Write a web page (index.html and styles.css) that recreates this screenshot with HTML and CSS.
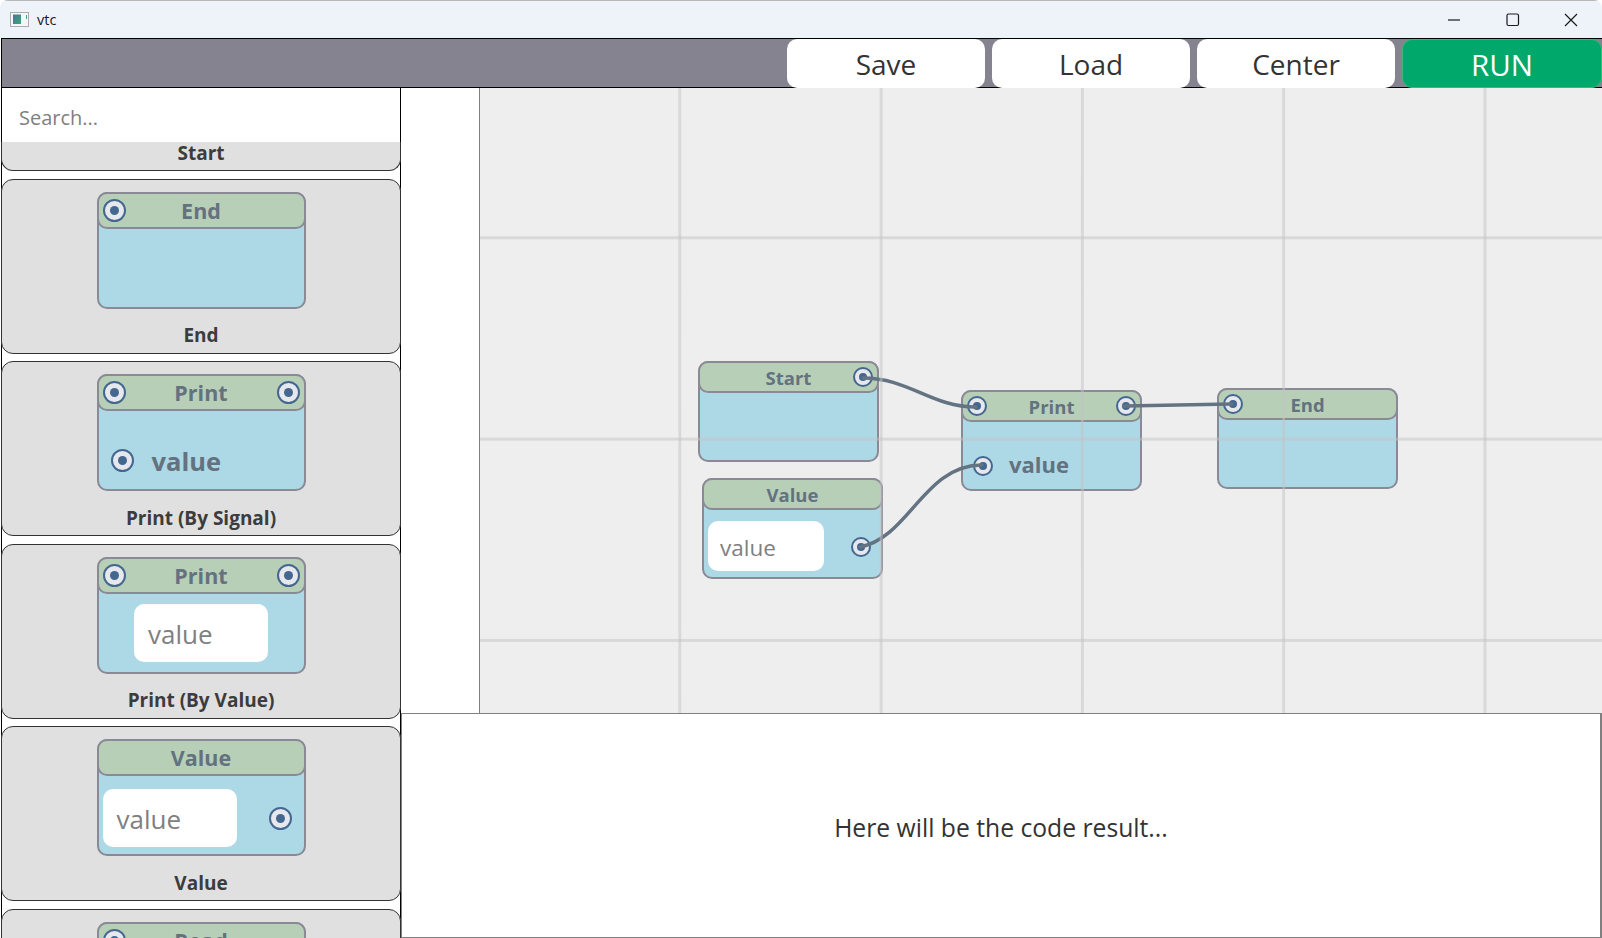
FILE: index.html
```html
<!DOCTYPE html>
<html>
  <head>
    <title>vtc</title>
    <link rel="stylesheet" href="styles.css">
  </head>
  <body>
    <div class="window">
      <div class="titlebar">
        <svg class="app-icon" width="20" height="16" viewBox="0 0 20 16">
          <defs>
            <linearGradient id="appFill" x1="0" y1="0" x2="1" y2="1">
              <stop offset="0" stop-color="#3f7a96"/>
              <stop offset="1" stop-color="#3fa578"/>
            </linearGradient>
          </defs>
          <rect x="0.5" y="0.5" width="18" height="14" fill="#f4f6f8" stroke="#a9adb3"/>
          <rect x="3" y="2.5" width="8" height="9.5" fill="url(#appFill)"/>
          <rect x="16" y="3" width="1" height="4" fill="#4f9f7f"/>
        </svg>
        <span class="app-name">vtc</span>
        <div class="window-controls">
          <svg width="14" height="14" viewBox="0 0 14 14"><path d="M0 7H12" stroke="#1a1a1a" stroke-width="1.2" fill="none"/></svg>
          <svg width="14" height="14" viewBox="0 0 14 14"><rect x="1" y="1" width="11.5" height="11.5" rx="1.5" stroke="#1a1a1a" stroke-width="1.2" fill="none"/></svg>
          <svg width="14" height="14" viewBox="0 0 14 14"><path d="M1 1L13 13M13 1L1 13" stroke="#1a1a1a" stroke-width="1.2" fill="none"/></svg>
        </div>
      </div>

      <div class="app">
        <div class="toolbar">
          <button class="tool-btn">Save</button>
          <button class="tool-btn">Load</button>
          <button class="tool-btn">Center</button>
          <button class="tool-btn run-btn">RUN</button>
        </div>

        <div class="main">
          <div class="sidebar">
            <div class="search">Search...</div>

            <div class="card card-cut">
              <div class="card-label">Start</div>
            </div>

            <div class="card">
              <div class="node">
                <div class="node-head">
                  <div class="slot"><span class="socket"></span></div>
                  <div class="node-title">End</div>
                  <div class="slot"></div>
                </div>
              </div>
              <div class="card-label">End</div>
            </div>

            <div class="card">
              <div class="node">
                <div class="node-head">
                  <div class="slot"><span class="socket"></span></div>
                  <div class="node-title">Print</div>
                  <div class="slot slot-end"><span class="socket"></span></div>
                </div>
                <div class="node-body body-param">
                  <span class="socket"></span>
                  <span class="param">value</span>
                </div>
              </div>
              <div class="card-label">Print (By Signal)</div>
            </div>

            <div class="card">
              <div class="node">
                <div class="node-head">
                  <div class="slot"><span class="socket"></span></div>
                  <div class="node-title">Print</div>
                  <div class="slot slot-end"><span class="socket"></span></div>
                </div>
                <div class="node-body body-center">
                  <div class="field">value</div>
                </div>
              </div>
              <div class="card-label">Print (By Value)</div>
            </div>

            <div class="card">
              <div class="node">
                <div class="node-head">
                  <div class="slot"></div>
                  <div class="node-title">Value</div>
                  <div class="slot"></div>
                </div>
                <div class="node-body body-value">
                  <div class="field">value</div>
                  <span class="socket"></span>
                </div>
              </div>
              <div class="card-label">Value</div>
            </div>

            <div class="card">
              <div class="node">
                <div class="node-head">
                  <div class="slot"><span class="socket"></span></div>
                  <div class="node-title">Read</div>
                  <div class="slot"></div>
                </div>
              </div>
            </div>
          </div>

          <div class="content">
            <div class="canvas-row">
              <div class="canvas-gutter"></div>
              <div class="canvas">
                <div class="node small on-start">
                  <div class="node-head">
                    <div class="slot"></div>
                    <div class="node-title">Start</div>
                    <div class="slot slot-end"><span class="socket"></span></div>
                  </div>
                </div>

                <div class="node small on-value">
                  <div class="node-head">
                    <div class="slot"></div>
                    <div class="node-title">Value</div>
                    <div class="slot"></div>
                  </div>
                  <div class="node-body body-value">
                    <div class="field">value</div>
                    <span class="socket"></span>
                  </div>
                </div>

                <div class="node small on-print">
                  <div class="node-head">
                    <div class="slot"><span class="socket"></span></div>
                    <div class="node-title">Print</div>
                    <div class="slot slot-end"><span class="socket"></span></div>
                  </div>
                  <div class="node-body body-param">
                    <span class="socket"></span>
                    <span class="param">value</span>
                  </div>
                </div>

                <div class="node small on-end">
                  <div class="node-head">
                    <div class="slot"><span class="socket"></span></div>
                    <div class="node-title">End</div>
                    <div class="slot"></div>
                  </div>
                </div>

                <svg class="wires" width="1121" height="625" viewBox="0 0 1121 625">
                  <path d="M384 290C430 290 452 319 497 319"/>
                  <path d="M381 459C430 450 445 377 503 377"/>
                  <path d="M645 318L753 316"/>
                </svg>
                <div class="grid-lines"></div>
              </div>
            </div>
            <div class="result">Here will be the code result...</div>
          </div>
        </div>
      </div>
    </div>
  </body>
</html>
```

FILE: styles.css
```css
* {
  box-sizing: border-box;
}

html,
body {
  margin: 0;
  height: 100%;
  overflow: hidden;
  background: #fff;
}

body {
  font-family: "Open Sans", "Noto Sans", sans-serif;
  color: #333;
}

.window {
  height: 938px;
  display: flex;
  flex-direction: column;
  border-radius: 8px 8px 0 0;
  overflow: hidden;
}

.titlebar {
  height: 38px;
  flex: none;
  display: flex;
  align-items: center;
  padding-left: 10px;
  background: #eef3f9;
  border-top: 1px solid #b8b8b8;
}

.app-icon {
  margin-right: 7px;
}

.app-name {
  font-size: 14.5px;
  color: #1a1a1a;
}

.window-controls {
  margin-left: auto;
  display: flex;
  gap: 44px;
  padding-right: 24px;
}

.app {
  flex: 1;
  min-height: 0;
  display: flex;
  flex-direction: column;
  border-left: 1px solid #000;
  margin-left: 1px;
}

.toolbar {
  height: 50px;
  flex: none;
  display: flex;
  justify-content: flex-end;
  gap: 7px;
  background: #85838f;
  border-top: 1px solid #000;
  border-bottom: 1px solid #000;
}

.tool-btn {
  width: 198px;
  margin: 0 0 -1px;
  border: none;
  border-radius: 10px;
  background: #fff;
  color: #333;
  font-family: inherit;
  font-size: 28px;
  padding: 1px 0 0;
}

.run-btn {
  width: 200px;
  background: #00a86b;
  border: 1px solid #3cb878;
  color: #fff;
  font-size: 29.5px;
}

.main {
  flex: 1;
  min-height: 0;
  display: flex;
}

.sidebar {
  width: 399px;
  flex: none;
  overflow-x: visible;
  overflow-y: clip;
  border-right: 1px solid #000;
  background: #fff;
}

.search {
  height: 54px;
  padding: 4px 0 0 17px;
  display: flex;
  align-items: center;
  font-size: 20px;
  color: #808080;
}

.card {
  height: 175px;
  margin: 0 -1px 7.6px -1px;
  padding-top: 12px;
  display: flex;
  flex-direction: column;
  align-items: center;
  background: #e0e0e0;
  border: 1px solid #333;
  border-radius: 12px;
}

.card-cut {
  height: 29px;
  margin-bottom: 7.5px;
  padding-top: 0;
  border-top: none;
  border-radius: 0 0 12px 12px;
}

.card-label {
  margin-top: auto;
  height: 40px;
  padding-top: 5px;
  display: flex;
  align-items: center;
  font-size: 19px;
  font-weight: 700;
  color: #3c3c3c;
}

.card-cut .card-label {
  height: 21px;
  margin-top: 0;
  padding-top: 0;
}

.node {
  width: 209px;
  height: 117px;
  flex: none;
  display: flex;
  flex-direction: column;
  background: #add8e6;
  border: 2px solid #8a8a96;
  border-radius: 10px;
}

.node-head {
  height: 37px;
  flex: none;
  margin: -2px -2px 0;
  display: grid;
  grid-template-columns: 1fr auto 1fr;
  align-items: center;
  padding: 0 4px;
  background: #b7cfb7;
  border: 2px solid #8a8a96;
  border-radius: 10px;
}

.node-title {
  font-size: 21.5px;
  font-weight: 700;
  color: #64727f;
}

.slot {
  display: flex;
}

.slot-end {
  justify-content: flex-end;
}

.socket {
  width: 23px;
  height: 23px;
  flex: none;
  display: flex;
  align-items: center;
  justify-content: center;
  background: #e6e8ee;
  border: 2px solid #44678f;
  border-radius: 50%;
}

.socket::after {
  content: "";
  width: 9px;
  height: 9px;
  border-radius: 50%;
  background: #44678f;
}

.node-body {
  flex: 1;
  display: flex;
  align-items: center;
}

.body-param {
  padding: 21px 0 0 12px;
  gap: 18px;
}

.param {
  font-size: 25.5px;
  font-weight: 700;
  color: #64727f;
}

.body-center {
  justify-content: center;
}

.body-value {
  justify-content: space-between;
  padding: 5px 12px 0 4px;
}

.body-value .socket {
  margin-top: 2px;
}

.field {
  width: 134px;
  height: 58px;
  display: flex;
  align-items: center;
  padding: 2px 0 0 14px;
  background: #fff;
  border-radius: 10px;
  font-size: 26px;
  color: #808080;
}

.content {
  flex: 1;
  min-width: 0;
  display: flex;
  flex-direction: column;
}

.canvas-row {
  height: 625px;
  flex: none;
  display: flex;
}

.canvas-gutter {
  width: 78px;
  flex: none;
}

.canvas {
  flex: 1;
  position: relative;
  overflow: hidden;
  background: #eeeeee;
  border-left: 1px solid #808080;
}

.grid-lines {
  position: absolute;
  inset: 0;
  pointer-events: none;
  background-image:
    linear-gradient(to right, transparent 198.3px, rgba(195, 195, 195, 0.5) 198.3px),
    linear-gradient(to bottom, transparent 198.3px, rgba(195, 195, 195, 0.5) 198.3px);
  background-size: 201.3px 201.3px;
  background-position: 0 0, 0 -50px;
}

.wires {
  position: absolute;
  left: -1px;
  top: 0;
  pointer-events: none;
}

.wires path {
  fill: none;
  stroke: #637382;
  stroke-width: 3.5;
  stroke-linecap: round;
}

.node.small {
  position: absolute;
  width: 181px;
  height: 101px;
}

.small .node-head {
  height: 32px;
  padding: 0 4px;
}

.small .node-title {
  font-size: 18.5px;
}

.small .socket {
  width: 20px;
  height: 20px;
}

.small .socket::after {
  width: 8px;
  height: 8px;
}

.small .body-param {
  padding: 17px 0 0 10px;
  gap: 16px;
}

.small .body-param .socket {
  margin-top: 3px;
}

.small .param {
  font-size: 22px;
}

.small .body-value {
  padding: 5px 10px 0 4px;
}

.small .field {
  width: 116px;
  height: 50px;
  padding-left: 12px;
  font-size: 22.5px;
}

.on-start {
  left: 218px;
  top: 273px;
  height: 102px;
}

.on-value {
  left: 222px;
  top: 390px;
}

.on-print {
  left: 481px;
  top: 302px;
  height: 102px;
}

.on-end {
  left: 737px;
  top: 300px;
  height: 102px;
}

.result {
  flex: 1;
  display: flex;
  align-items: center;
  justify-content: center;
  padding-top: 3px;
  font-size: 24.7px;
  color: #333;
  background: #fff;
  border: 1px solid #808080;
  border-right-width: 2px;
}
```
